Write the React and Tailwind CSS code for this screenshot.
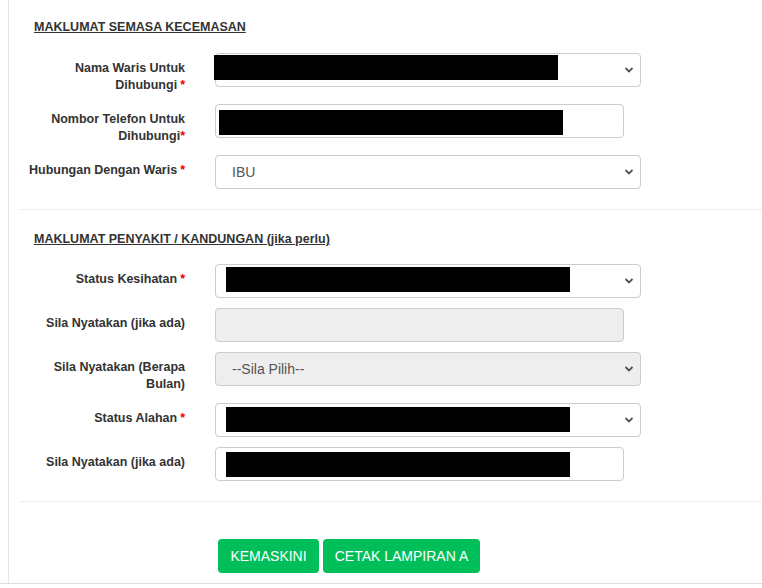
import React from 'react';

const Req = () => <span className="text-[#e00] ml-[3px]">*</span>;

const Chevron = () => (
    <svg className="absolute right-[6px] top-1/2 -translate-y-1/2" width="10" height="7" viewBox="0 0 10 7">
        <path d="M1.5 1.5 L5 5 L8.5 1.5" fill="none" stroke="#555" strokeWidth="1.8" />
    </svg>
);

const Redact = ({ className }) => <div className={`absolute bg-black ${className}`} />;

const Field = ({ type, value, disabled, redact }) => {
    const base = `relative h-[34px] rounded-[4px] border border-[#ccc] ${disabled ? 'bg-[#eee]' : 'bg-white'} flex items-center pl-[16px] text-[14px] text-[#555]`;
    if (type === 'select') {
        return (
            <div className={`${base} w-[426px]`}>
                {value}
                <Chevron />
                {redact}
            </div>
        );
    }
    return (
        <div className={`${base} w-[409px]`}>
            {value}
            {redact}
        </div>
    );
};

const Row = ({ label, children }) => (
    <div className="flex items-start mb-[10px]">
        <div className="w-[181px] pr-[15px] pt-[7px] text-right text-[12.5px] leading-[17px] font-bold text-[#333]">{label}</div>
        <div className="pl-[15px]">{children}</div>
    </div>
);

const App = () => {
    return (
        <div className="w-[762px] h-[588px] bg-white overflow-hidden" style={{ fontFamily: '"Liberation Sans", Arial, sans-serif' }}>
            <div className="h-[584px] border-b border-[#ddd]">
                <div className="ml-[8px] h-full border-l border-[#e5e5e5] pl-[10px]">
                    <div className="pt-[19px] pl-[15px] text-[12.5px] leading-[17px] font-bold text-[#333] underline">MAKLUMAT SEMASA KECEMASAN</div>
                    <div className="mt-[17px]">
                        <Row label={<>Nama Waris Untuk<br />Dihubungi<Req /></>}>
                            <Field type="select" redact={<Redact className="left-[-2px] top-[1px] w-[344px] h-[25px]" />} />
                        </Row>
                        <Row label={<>Nombor Telefon Untuk<br />Dihubungi<span className="text-[#e00]">*</span></>}>
                            <Field type="text" redact={<Redact className="left-[3px] top-[5px] w-[344px] h-[25px]" />} />
                        </Row>
                        <Row label={<>Hubungan Dengan Waris<Req /></>}>
                            <Field type="select" value="IBU" />
                        </Row>
                    </div>
                    <div className="mt-[20px] h-px bg-[#eee]" />
                    <div className="pt-[21px] pl-[15px] text-[12.5px] leading-[17px] font-bold text-[#333] underline">MAKLUMAT PENYAKIT / KANDUNGAN (jika perlu)</div>
                    <div className="mt-[16px]">
                        <Row label={<>Status Kesihatan<Req /></>}>
                            <Field type="select" redact={<Redact className="left-[10px] top-[2px] w-[344px] h-[25px]" />} />
                        </Row>
                        <Row label="Sila Nyatakan (jika ada)">
                            <Field type="text" disabled />
                        </Row>
                        <Row label={<>Sila Nyatakan (Berapa<br />Bulan)</>}>
                            <Field type="select" value="--Sila Pilih--" disabled />
                        </Row>
                        <Row label={<>Status Alahan<Req /></>}>
                            <Field type="select" redact={<Redact className="left-[10px] top-[3px] w-[344px] h-[25px]" />} />
                        </Row>
                        <Row label="Sila Nyatakan (jika ada)">
                            <Field type="text" redact={<Redact className="left-[10px] top-[4px] w-[344px] h-[25px]" />} />
                        </Row>
                    </div>
                    <div className="mt-[20px] h-px bg-[#eee]" />
                    <div className="mt-[37px] pl-[199px] flex gap-[4px]">
                        <button className="h-[34px] w-[101px] rounded-[4px] bg-[#00bf5a] text-white text-[14px]">KEMASKINI</button>
                        <button className="h-[34px] w-[157px] rounded-[4px] bg-[#00bf5a] text-white text-[14px]">CETAK LAMPIRAN A</button>
                    </div>
                </div>
            </div>
        </div>
    );
};

export default App;
